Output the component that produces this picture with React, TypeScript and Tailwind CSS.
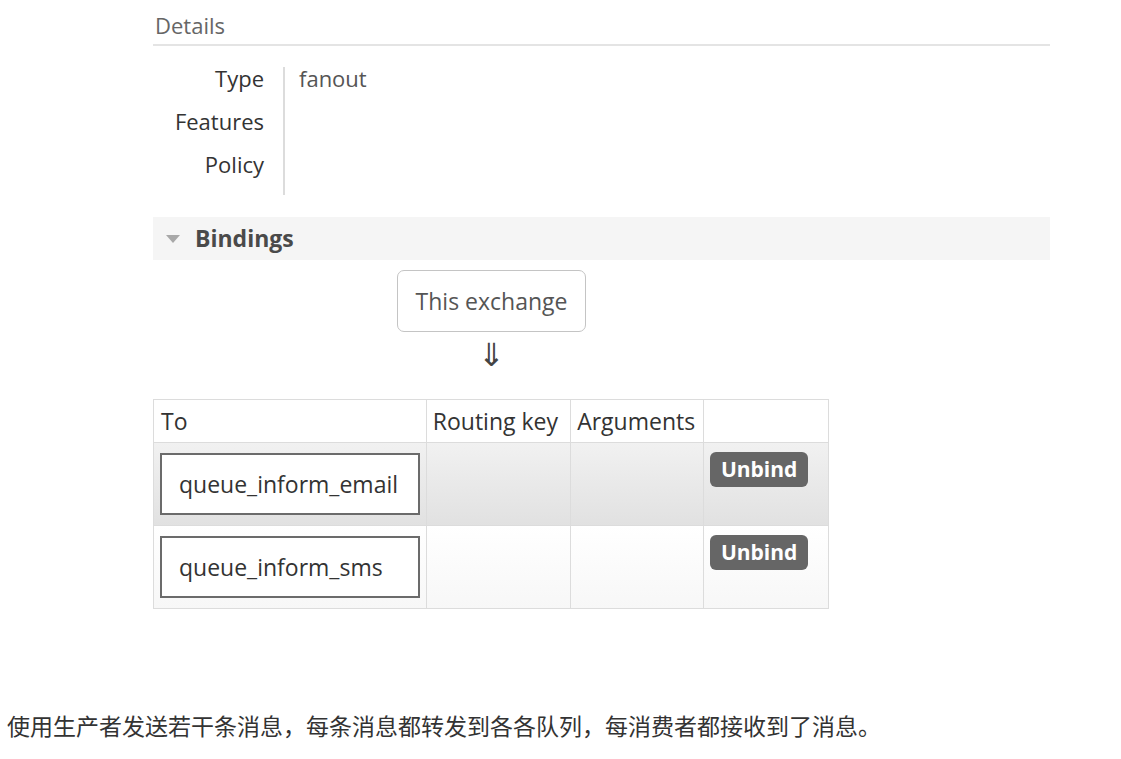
import React from "react";

const font = { fontFamily: '"Open Sans", "Noto Sans", sans-serif' };

function BindingRow({ queue, shaded }: { queue: string; shaded: boolean }) {
  return (
    <tr
      className={
        shaded
          ? "h-[83px] bg-gradient-to-b from-[#f1f1f1] to-[#e1e1e1]"
          : "h-[83px] bg-gradient-to-b from-white to-[#f7f7f7]"
      }
    >
      <td className="border border-[#dcdcdc] px-[6px] align-middle">
        <div className="flex h-[62px] items-center border-2 border-[#6b6b6b] bg-white pl-[17px] text-[23px] text-[#333]">
          {queue}
        </div>
      </td>
      <td className="border border-[#dcdcdc]" />
      <td className="border border-[#dcdcdc]" />
      <td className="border border-[#dcdcdc] px-[6px] pt-[9px] align-top">
        <button className="h-[35px] w-[98px] rounded-[6px] bg-[#666] text-[21px] font-bold leading-none text-white">
          Unbind
        </button>
      </td>
    </tr>
  );
}

export default function App() {
  return (
    <div className="h-[759px] w-[1121px] bg-white" style={font}>
      <div className="ml-[153px] w-[897px] pt-[11px]">
        <h2 className="border-b-2 border-[#e4e4e4] pb-[5px] pl-[2px] text-[22px] leading-[28px] text-[#666]">
          Details
        </h2>

        <div className="mt-[21px] flex">
          <div className="w-[130px] pr-[19px] text-right text-[22px] font-medium leading-[43px] text-[#333]">
            <div className="-mt-[10px]">Type</div>
            <div>Features</div>
            <div>Policy</div>
          </div>
          <div className="h-[128px] w-[2px] bg-[#dcdcdc]" />
          <div className="-mt-[10px] pl-[14px] text-[22px] leading-[43px] text-[#555]">fanout</div>
        </div>

        <div className="mt-[22px] flex h-[43px] items-center bg-[#f5f5f5] pl-[12px]">
          <svg width="16" height="10" viewBox="0 0 16 10" className="mr-[14px]">
            <path d="M1 1 L15 1 L8 9 Z" fill="#a8a8a8" />
          </svg>
          <span className="text-[23px] font-bold text-[#4a4a4a]">Bindings</span>
        </div>

        <div className="ml-[244px] mt-[10px] flex w-[189px] flex-col items-center">
          <div className="flex h-[62px] w-[189px] items-center justify-center rounded-[7px] border border-[#c4c4c4] text-[23px] text-[#555]">
            This exchange
          </div>
          <div className="mt-[5px] text-[32px] leading-[34px] text-[#444]">⇓</div>
        </div>

        <table className="mt-[28px] w-[676px] border-collapse border border-[#dcdcdc] text-left">
          <colgroup>
            <col className="w-[273px]" />
            <col className="w-[145px]" />
            <col className="w-[133px]" />
            <col className="w-[125px]" />
          </colgroup>
          <thead>
            <tr className="h-[43px] text-[23px] font-normal text-[#333]">
              <th className="border border-[#dcdcdc] px-[7px] font-normal">To</th>
              <th className="border border-[#dcdcdc] px-[6px] font-normal">Routing key</th>
              <th className="border border-[#dcdcdc] px-[6px] font-normal">Arguments</th>
              <th className="border border-[#dcdcdc]" />
            </tr>
          </thead>
          <tbody>
            <BindingRow queue="queue_inform_email" shaded />
            <BindingRow queue="queue_inform_sms" shaded={false} />
          </tbody>
        </table>
      </div>

      <p
        className="mt-[99px] pl-[7px] text-[23px] text-[#333]"
        style={{ fontFamily: '"Noto Sans CJK SC", "Noto Sans", sans-serif' }}
      >
        使用生产者发送若干条消息，每条消息都转发到各各队列，每消费者都接收到了消息。
      </p>
    </div>
  );
}
